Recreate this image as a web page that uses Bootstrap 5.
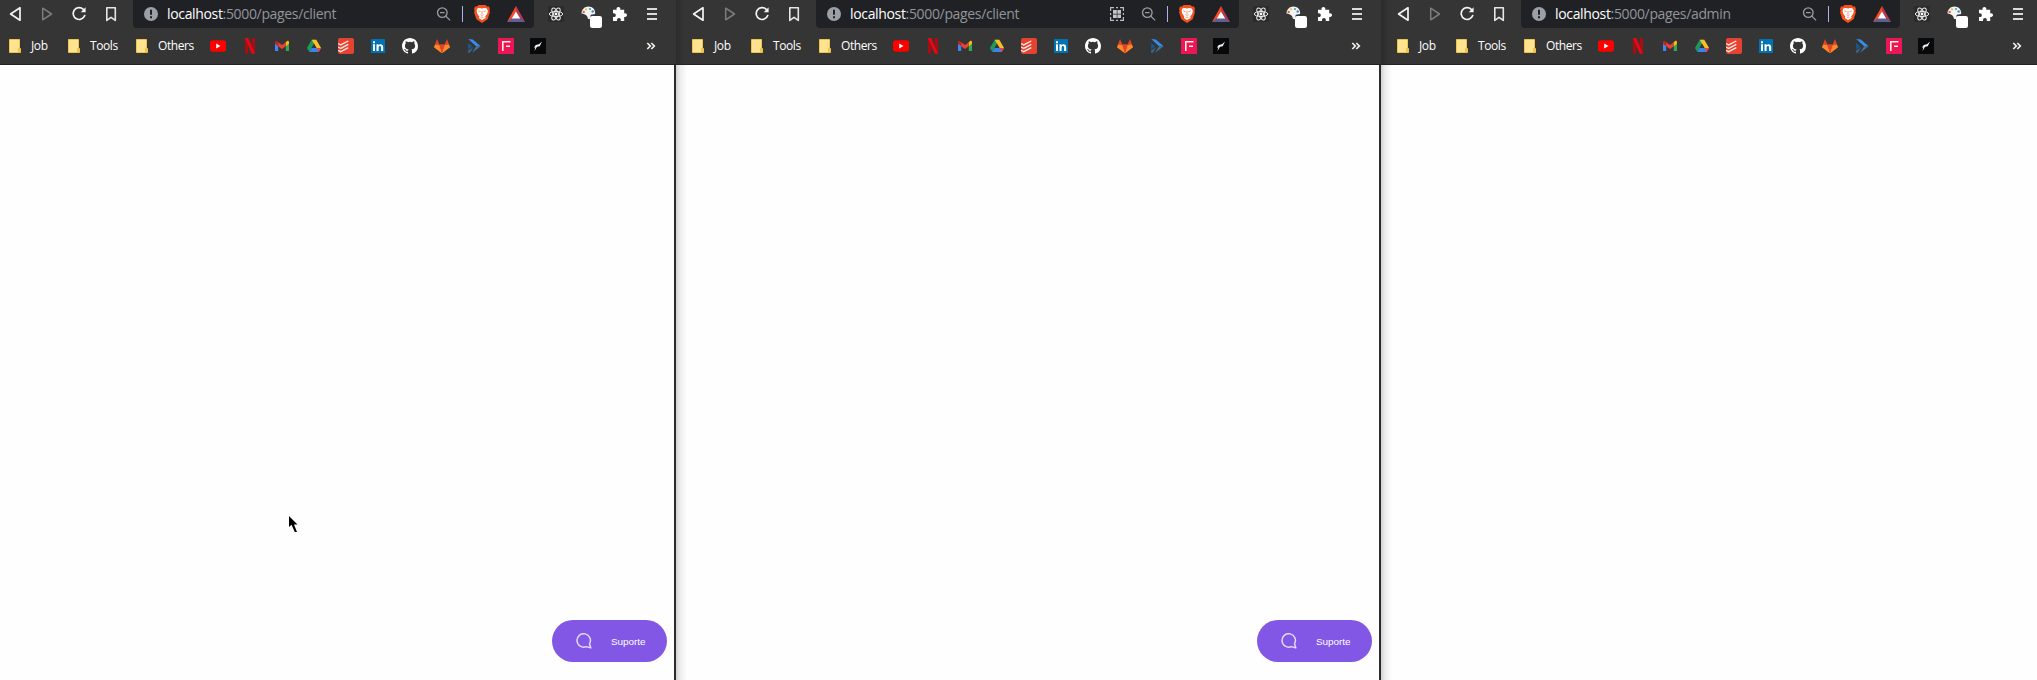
<!DOCTYPE html>
<html lang="pt-BR">
<head>
<meta charset="utf-8">
<meta name="viewport" content="width=device-width, initial-scale=1">
<title>Suporte</title>
<link href="https://cdn.jsdelivr.net/npm/bootstrap@5.3.0/dist/css/bootstrap.min.css" rel="stylesheet">
<style>
  body { font-family: "Open Sans", "Noto Sans", sans-serif; background: #fefefe; }
  .browser { --lead: 7px; --trail: 16px; height: 680px; flex: none; }
  .browser-a { --lead: 0px; width: 676px; }
  .browser-b { width: 705px; }
  .browser-c { width: 656px; --trail: 11px; }
  .chrome { height: 65px; background: #353535; border-bottom: 1px solid #232323; color: #fff; padding-left: var(--lead); }
  .browser + .browser .chrome { background: linear-gradient(90deg, #2b2b2b, #353535 8px); }
  .toolbar { height: 28px; padding: 0 var(--trail) 0 8px; }
  .icons { gap: 16px; }
  svg { display: block; flex: none; }
  .address { height: 28px; margin: 0 14px 0 13px; padding: 0 9px 0 11px; background: #202124; border-radius: 0 0 4px 4px; color: #92959a; font-size: 14px; line-height: 28px; }
  .url { margin-left: 9px; letter-spacing: -.34px; white-space: nowrap; }
  .url b { color: #fff; font-weight: 400; }
  .sep { width: 1px; height: 16px; background: #a9b5e4; margin: 0 11px 0 10px; }
  .bookmarks { height: 36px; padding: 0 calc(var(--trail) + 1px) 0 9px; font-size: 12px; line-height: 16px; }
  .folder { gap: 10px; letter-spacing: -.4px; white-space: nowrap; }
  .f1 { width: 59px; } .f2 { width: 68px; } .f3 { width: 74px; }
  .page { background: #fefefe; padding: 0 7px 18px 0; }
  .edge { border-right: 2px solid #2b2b2b; }
  .shade { background: linear-gradient(90deg, #d2d2d2, #ededed 4px, #fefefe 11px); }
  .support { width: 115px; height: 42px; border-radius: 21px; background: #8257e5; color: #fff; font: 9.9px "Liberation Sans", Arial, sans-serif; border: 0; padding: 0 0 0 24px; gap: 19px; }
  .pointer { left: 289px; top: 516px; }
</style>
</head>
<body class="overflow-hidden">

<svg width="0" height="0" class="position-absolute" aria-hidden="true">
  <symbol id="back" viewBox="0 0 16 16"><path d="M12 1.8v12.4L2.6 8z" fill="none" stroke="#f4f4f4" stroke-width="1.7" stroke-linejoin="round"/></symbol>
  <symbol id="forward" viewBox="0 0 16 16"><path d="M2.7 2.2v11.6L11.5 8z" fill="none" stroke="#7d7d7d" stroke-width="1.5" stroke-linejoin="round"/></symbol>
  <symbol id="reload" viewBox="0 0 16 16"><path d="M11.300 3.400A5.900 5.900 0 1 0 12.700 9.500" fill="none" stroke="#f4f4f4" stroke-width="1.700" stroke-linecap="round"/><path d="M13.600 1.200v5H8.700z" fill="#f4f4f4"/></symbol>
  <symbol id="mark-page" viewBox="0 0 16 16"><path d="M2.8 1.8h8.500v12.600L7 11.300l-4.200 3.100z" fill="none" stroke="#e6e6e6" stroke-width="1.600" stroke-linejoin="round"/></symbol>
  <symbol id="info" viewBox="0 0 14 14"><circle cx="7" cy="7" r="7" fill="#9aa0a6"/><path d="M7 2.800v5" stroke="#202124" stroke-width="2"/><path d="M7 9.300v2" stroke="#202124" stroke-width="2"/></symbol>
  <symbol id="zoom-out" viewBox="0 0 16 16"><g fill="none" stroke="#9b9da1" stroke-width="1.300"><circle cx="6.300" cy="6.600" r="4.800"/><path d="M4 6.600h4.600M9.800 10.100l4.300 4.300"/></g></symbol>
  <symbol id="qr" viewBox="0 0 16 16"><path d="M1.600 5V1.600H5M7 1.600h2M11 1.600h3.400V5M14.400 7v2M14.400 11v3.400H11M9 14.400H7M5 14.400H1.600V11M1.600 9V7" fill="none" stroke="#b9bbbe" stroke-width="1.200"/><path d="M4 4h3.800v3.800H4zM8.400 4H12v3.800H8.400zM4 8.400h3.800V12H4zM8.400 8.400H12V12H8.400z" fill="#c4c3cc"/></symbol>
  <symbol id="brave" viewBox="0 0 16 18"><path d="M4.500 0h7l1.500 1.600 2-.1 1 2.700-.6 1.300.5 1.900-2.300 6.800L8 18l-5.600-3.800L.1 7.400l.5-1.900L0 4.200l1-2.700 2 .1z" fill="#f6501e"/><path d="M3.500 3.200 6 3l2 .5L10 3l2.500.2 1.400 2.600-.7 3-2 2.600.5 1.500L8 15l-3.200-2.100.5-1.500-2-2.600-.7-3z" fill="#fff"/><path d="m4.300 6 2.200.6M11.700 6l-2.200.6M8 6v3M6.500 9.600 8 10.400l1.500-.8M6.700 12.600 8 12l1.300.6" stroke="#f6673a" stroke-width=".7" fill="none"/></symbol>
  <symbol id="bat" viewBox="0 0 18 16"><path d="M9 0 0 16l9-5.500z" fill="#ff4724"/><path d="m9 0 9 16-9-5.500z" fill="#9e1f63"/><path d="M9 0v5.500l4 6.500 5 4z" fill="#b43a4b"/><path d="M0 16h18l-5-4H5z" fill="#5d6091"/><path d="m9 5.500 4.200 6.900H4.800z" fill="#fff"/></symbol>
  <symbol id="react" viewBox="0 0 16 16"><path fill="#2b2b2b" d="M0 0h16v16H0z"/><g fill="none" stroke="#ededed" stroke-width="1"><ellipse cx="8" cy="8" rx="6.700" ry="2.600"/><ellipse cx="8" cy="8" rx="6.700" ry="2.600" transform="rotate(60 8 8)"/><ellipse cx="8" cy="8" rx="6.700" ry="2.600" transform="rotate(120 8 8)"/></g><circle cx="8" cy="8" r="1.400" fill="#fff"/></symbol>
  <symbol id="palette" viewBox="0 0 24 24"><path d="M1.500 9.500C1.500 5.300 4.800 2.500 8.500 2.500s6.700 2.800 6.700 6.600c0 1.300-1.200 1.400-2.700 1.400-2.500 0-2 1.500-2 3.500 0 1.500-2.500 1.500-2.800 0C7.500 12 6 10.300 1.500 9.500z" fill="#f4f4f4"/><circle cx="3.700" cy="7.900" r="1.200" fill="#e2613b"/><circle cx="6" cy="5.300" r="1.100" fill="#f0b93f"/><circle cx="10" cy="5.100" r="1.100" fill="#51a8a9"/><circle cx="12.700" cy="7.500" r="1.200" fill="#3689d4"/><rect x="10" y="12" width="12" height="12" rx="2.200" fill="#fff"/></symbol>
  <symbol id="puzzle" viewBox="0 0 16 16"><path d="M1 3.700h3.700C3.900 1.900 5.200.9 6.400.9s2.500 1 1.800 2.800h4v3.700c1.700-.7 2.800.5 2.800 1.700s-1.100 2.500-2.800 1.700V15H8.700c.7-1.800-.5-2.900-1.700-2.900S4.400 13.200 5.100 15H1v-4.200c1.800.7 2.800-.5 2.800-1.600S2.800 6.900 1 7.500z" fill="#fff"/></symbol>
  <symbol id="menu" viewBox="0 0 16 16"><path d="M3 3h10M3 8h10M3 13h10" stroke="#dadada" stroke-width="1.800"/></symbol>
  <symbol id="folder" viewBox="0 0 12 14"><path d="M.5.500h10v9h1v4H.5z" fill="#ffe391" stroke="#eec44b"/><path d="M9.500 9.500h1v4h-1z" fill="#ffe391" stroke="#e8b52f" stroke-width=".7"/></symbol>
  <symbol id="youtube" viewBox="0 0 16 16"><rect y="2.200" width="16" height="11.600" rx="2.800" fill="#f00"/><path d="m6.200 5.500 4.300 2.500-4.300 2.500z" fill="#fff"/></symbol>
  <symbol id="netflix" viewBox="0 0 16 16"><path d="M3 0h3.300v15.600L3 16zM9.700 0H13v16l-3.300-.4z" fill="#a80d14"/><path d="M3 0h3.300L13 16l-3.300-.4z" fill="#e50914"/></symbol>
  <symbol id="gmail" viewBox="0 0 16 16"><path d="M1 4v8.400c0 .4.300.6.600.6h2.600V6.600z" fill="#4285f4"/><path d="M15 4v8.400c0 .4-.3.600-.6.600h-2.600V6.600z" fill="#34a853"/><path d="M11.800 4.200v4L15 5.700V4.200c0-1.500-1.400-1.700-2.200-1z" fill="#fbbc04"/><path d="M4.200 8.200v-4L8 7l3.800-2.800v4L8 11z" fill="#ea4335"/><path d="M1 4.200v1.500l3.200 2.500v-4l-1-.9C2.300 2.600 1 3 1 4.200z" fill="#c5221f"/></symbol>
  <symbol id="drive" viewBox="0 0 16 16"><path d="M5.700 1.700h4.600L3.300 14 .9 9.900z" fill="#1b9b57"/><path d="M5.700 1.700h4.600l4.800 8.200h-4.600z" fill="#fbbd28"/><path d="M3.300 14 5.600 9.900h9.500L12.700 14z" fill="#3b83ec"/><path d="m10.500 9.900 2.200 4.100 2.400-4.100z" fill="#e94435"/><path d="M8 5.700 5.600 9.900h4.900z" fill="#353535"/></symbol>
  <symbol id="todoist" viewBox="0 0 16 16"><rect width="16" height="16" rx="2" fill="#e44332"/><path d="m0 5.500 2.700 1.400L10.300 3M0 9l2.700 1.400 7.600-4M0 12.300l2.700 1.400 7.600-4" fill="none" stroke="#ffe5dd" stroke-width="1.300"/></symbol>
  <symbol id="linkedin" viewBox="0 0 16 16"><rect x="1" y="1" width="14" height="14" rx=".6" fill="#0073b2"/><path d="M3 6.300h2V13H3zM3 3.300h2v2H3zM6.500 6.300h2v1c1.200-1.900 4.700-1.600 4.700 1.700v4h-2.100V9.600c0-2.200-2.500-2-2.500 0V13H6.500z" fill="#fff"/></symbol>
  <symbol id="github" viewBox="0 0 16 16"><path fill="#fff" d="M8 0C3.580 0 0 3.580 0 8c0 3.540 2.290 6.530 5.470 7.590.4.070.55-.17.55-.38 0-.19-.01-.82-.01-1.490-2.010.37-2.530-.49-2.690-.94-.09-.23-.48-.94-.82-1.130-.28-.15-.68-.52-.01-.53.63-.01 1.080.58 1.230.82.72 1.210 1.870.87 2.330.66.070-.52.280-.87.510-1.070-1.780-.2-3.640-.89-3.640-3.950 0-.87.310-1.590.82-2.150-.08-.2-.36-1.020.080-2.120 0 0 .67-.21 2.200.82a7.600 7.600 0 0 1 4 0c1.530-1.040 2.200-.82 2.200-.82.440 1.100.160 1.920.080 2.120.510.560.820 1.270.820 2.150 0 3.070-1.870 3.750-3.650 3.950.290.250.540.730.540 1.480 0 1.070-.01 1.930-.01 2.200 0 .210.150.460.550.380A8 8 0 0 0 16 8c0-4.420-3.580-8-8-8"/></symbol>
  <symbol id="gitlab" viewBox="0 0 16 16"><path d="M3 1 0 9.300 8 15.300l8-6L13 1l-2.400 5.500H5.400z" fill="#e24329"/><path d="M1.300 6.500 0 9.300l8 6-2.500-8z" fill="#fc8a26"/><path d="M14.700 6.500 16 9.300l-8 6 2.500-8z" fill="#fc8a26"/><path d="M5.400 6.500h5.200L8 15.300z" fill="#e24329"/></symbol>
  <symbol id="azure" viewBox="0 0 16 16"><path d="m2.200 1 4.600.6 7.800 6.600-4.200.2z" fill="#378eea"/><path d="m10 8.400 4.600-.2-8.500 6.600z" fill="#44759e"/><path d="m2 5 4.600 3.200L2 11.500z" fill="#1b568b"/><path d="m2 12.400 5.400-3.500-3.300 5.900H2z" fill="#3b6185"/></symbol>
  <symbol id="pink-f" viewBox="0 0 16 16"><path fill="#ed1556" d="M0 0h16v16H0z"/><path d="M4.800 13V3.700h7.700M8 8.300h4" fill="none" stroke="#fff0d7" stroke-width="1.600"/></symbol>
  <symbol id="dark-bird" viewBox="0 0 16 16"><path fill="#08090a" d="M0 0h16v16H0z"/><path d="m12 3.500-2.300 4.800L7 8.800l-2.500 4.100.8-3.600-1.500.4 2-2.800 3.200-.6z" fill="#f7f7f7"/></symbol>
  <symbol id="more" viewBox="0 0 16 16"><path d="m4.300 5 3 3-3 3M8.300 5l3 3-3 3" fill="none" stroke="#f2f2e9" stroke-width="1.700"/></symbol>
  <symbol id="chat" viewBox="0 0 16 16"><path d="M13.500 10.800A6.700 6.700 0 1 0 10.300 13.600L14.800 14.900z" fill="none" stroke="#e3d9fa" stroke-width="1.500" stroke-linejoin="round"/></symbol>
</svg>

<main class="d-flex position-relative">
  <section class="browser browser-a d-flex flex-column">
    <header class="chrome">
      <nav class="toolbar d-flex align-items-center">
        <div class="icons d-flex"><svg width="16" height="16"><use href="#back"/></svg><svg width="16" height="16"><use href="#forward"/></svg><svg width="16" height="16"><use href="#reload"/></svg><svg width="16" height="16"><use href="#mark-page"/></svg></div>
        <div class="address d-flex align-items-center flex-grow-1"><svg width="14" height="14"><use href="#info"/></svg><span class="url"><b>localhost</b>:5000/pages/client</span><svg class="ms-auto" width="16" height="16"><use href="#zoom-out"/></svg><span class="sep"></span><svg width="16" height="18"><use href="#brave"/></svg><svg style="margin-left:17px" width="18" height="16"><use href="#bat"/></svg></div>
        <div class="icons d-flex"><svg width="16" height="16"><use href="#react"/></svg><svg class="overflow-visible" width="16" height="16"><use href="#palette" width="24" height="24" y="-2"/></svg><svg width="16" height="16"><use href="#puzzle"/></svg><svg width="16" height="16"><use href="#menu"/></svg></div>
      </nav>
      <nav class="bookmarks d-flex align-items-center">
        <span class="folder f1 d-flex align-items-center"><svg width="12" height="14"><use href="#folder"/></svg>Job</span><span class="folder f2 d-flex align-items-center"><svg width="12" height="14"><use href="#folder"/></svg>Tools</span><span class="folder f3 d-flex align-items-center"><svg width="12" height="14"><use href="#folder"/></svg>Others</span>
        <div class="icons d-flex"><svg width="16" height="16"><use href="#youtube"/></svg><svg width="16" height="16"><use href="#netflix"/></svg><svg width="16" height="16"><use href="#gmail"/></svg><svg width="16" height="16"><use href="#drive"/></svg><svg width="16" height="16"><use href="#todoist"/></svg><svg width="16" height="16"><use href="#linkedin"/></svg><svg width="16" height="16"><use href="#github"/></svg><svg width="16" height="16"><use href="#gitlab"/></svg><svg width="16" height="16"><use href="#azure"/></svg><svg width="16" height="16"><use href="#pink-f"/></svg><svg width="16" height="16"><use href="#dark-bird"/></svg></div>
        <svg class="ms-auto" width="16" height="16"><use href="#more"/></svg>
      </nav>
    </header>
    <div class="page edge flex-grow-1 d-flex align-items-end justify-content-end"><button class="support d-flex align-items-center"><svg width="16" height="16"><use href="#chat"/></svg>Suporte</button></div>
  </section>

  <section class="browser browser-b d-flex flex-column">
    <header class="chrome">
      <nav class="toolbar d-flex align-items-center">
        <div class="icons d-flex"><svg width="16" height="16"><use href="#back"/></svg><svg width="16" height="16"><use href="#forward"/></svg><svg width="16" height="16"><use href="#reload"/></svg><svg width="16" height="16"><use href="#mark-page"/></svg></div>
        <div class="address d-flex align-items-center flex-grow-1"><svg width="14" height="14"><use href="#info"/></svg><span class="url"><b>localhost</b>:5000/pages/client</span><svg class="ms-auto me-3" width="16" height="16"><use href="#qr"/></svg><svg width="16" height="16"><use href="#zoom-out"/></svg><span class="sep"></span><svg width="16" height="18"><use href="#brave"/></svg><svg style="margin-left:17px" width="18" height="16"><use href="#bat"/></svg></div>
        <div class="icons d-flex"><svg width="16" height="16"><use href="#react"/></svg><svg class="overflow-visible" width="16" height="16"><use href="#palette" width="24" height="24" y="-2"/></svg><svg width="16" height="16"><use href="#puzzle"/></svg><svg width="16" height="16"><use href="#menu"/></svg></div>
      </nav>
      <nav class="bookmarks d-flex align-items-center">
        <span class="folder f1 d-flex align-items-center"><svg width="12" height="14"><use href="#folder"/></svg>Job</span><span class="folder f2 d-flex align-items-center"><svg width="12" height="14"><use href="#folder"/></svg>Tools</span><span class="folder f3 d-flex align-items-center"><svg width="12" height="14"><use href="#folder"/></svg>Others</span>
        <div class="icons d-flex"><svg width="16" height="16"><use href="#youtube"/></svg><svg width="16" height="16"><use href="#netflix"/></svg><svg width="16" height="16"><use href="#gmail"/></svg><svg width="16" height="16"><use href="#drive"/></svg><svg width="16" height="16"><use href="#todoist"/></svg><svg width="16" height="16"><use href="#linkedin"/></svg><svg width="16" height="16"><use href="#github"/></svg><svg width="16" height="16"><use href="#gitlab"/></svg><svg width="16" height="16"><use href="#azure"/></svg><svg width="16" height="16"><use href="#pink-f"/></svg><svg width="16" height="16"><use href="#dark-bird"/></svg></div>
        <svg class="ms-auto" width="16" height="16"><use href="#more"/></svg>
      </nav>
    </header>
    <div class="page edge shade flex-grow-1 d-flex align-items-end justify-content-end"><button class="support d-flex align-items-center"><svg width="16" height="16"><use href="#chat"/></svg>Suporte</button></div>
  </section>

  <section class="browser browser-c d-flex flex-column">
    <header class="chrome">
      <nav class="toolbar d-flex align-items-center">
        <div class="icons d-flex"><svg width="16" height="16"><use href="#back"/></svg><svg width="16" height="16"><use href="#forward"/></svg><svg width="16" height="16"><use href="#reload"/></svg><svg width="16" height="16"><use href="#mark-page"/></svg></div>
        <div class="address d-flex align-items-center flex-grow-1"><svg width="14" height="14"><use href="#info"/></svg><span class="url"><b>localhost</b>:5000/pages/admin</span><svg class="ms-auto" width="16" height="16"><use href="#zoom-out"/></svg><span class="sep"></span><svg width="16" height="18"><use href="#brave"/></svg><svg style="margin-left:17px" width="18" height="16"><use href="#bat"/></svg></div>
        <div class="icons d-flex"><svg width="16" height="16"><use href="#react"/></svg><svg class="overflow-visible" width="16" height="16"><use href="#palette" width="24" height="24" y="-2"/></svg><svg width="16" height="16"><use href="#puzzle"/></svg><svg width="16" height="16"><use href="#menu"/></svg></div>
      </nav>
      <nav class="bookmarks d-flex align-items-center">
        <span class="folder f1 d-flex align-items-center"><svg width="12" height="14"><use href="#folder"/></svg>Job</span><span class="folder f2 d-flex align-items-center"><svg width="12" height="14"><use href="#folder"/></svg>Tools</span><span class="folder f3 d-flex align-items-center"><svg width="12" height="14"><use href="#folder"/></svg>Others</span>
        <div class="icons d-flex"><svg width="16" height="16"><use href="#youtube"/></svg><svg width="16" height="16"><use href="#netflix"/></svg><svg width="16" height="16"><use href="#gmail"/></svg><svg width="16" height="16"><use href="#drive"/></svg><svg width="16" height="16"><use href="#todoist"/></svg><svg width="16" height="16"><use href="#linkedin"/></svg><svg width="16" height="16"><use href="#github"/></svg><svg width="16" height="16"><use href="#gitlab"/></svg><svg width="16" height="16"><use href="#azure"/></svg><svg width="16" height="16"><use href="#pink-f"/></svg><svg width="16" height="16"><use href="#dark-bird"/></svg></div>
        <svg class="ms-auto" width="16" height="16"><use href="#more"/></svg>
      </nav>
    </header>
    <div class="page shade flex-grow-1"></div>
  </section>

  <svg class="pointer position-absolute" width="9" height="16" viewBox="0 0 9 16"><path d="M0 0v11l2.500-2.300L5.800 16H8L5 8.500h3.500z" fill="#000"/></svg>
</main>
<script src="https://cdn.jsdelivr.net/npm/bootstrap@5.3.0/dist/js/bootstrap.bundle.min.js"></script>
</body>
</html>
